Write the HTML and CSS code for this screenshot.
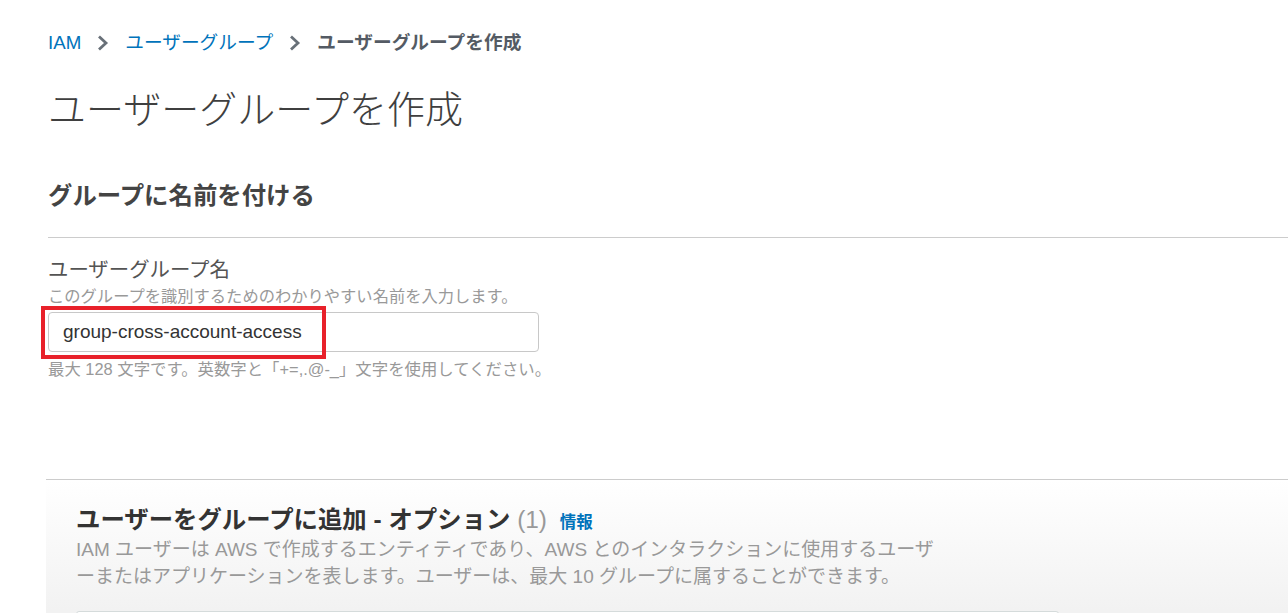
FILE: index.html
```html
<!DOCTYPE html>
<html lang="ja">
<head>
  <meta charset="UTF-8" />
  <meta name="viewport" content="width=device-width, initial-scale=1.0"/>
  <title>ユーザーグループを作成</title>
  <link rel="stylesheet" href="styles.css">
</head>
<body>

  <div class="page">
    <nav class="breadcrumb">
      <a href="#">IAM</a>
      <svg class="chevron" width="12" height="18" viewBox="0 0 12 18"><path d="M2 2.5 L9 9 L2 15.5" fill="none" stroke="#687078" stroke-width="2.8"/></svg>
      <a href="#">ユーザーグループ</a>
      <svg class="chevron" width="12" height="18" viewBox="0 0 12 18"><path d="M2 2.5 L9 9 L2 15.5" fill="none" stroke="#687078" stroke-width="2.8"/></svg>
      <span class="current">ユーザーグループを作成</span>
    </nav>

    <h1>ユーザーグループを作成</h1>

    <div class="section-head">
      <h2>グループに名前を付ける</h2>
    </div>

    <div class="field">
      <label for="groupName">ユーザーグループ名</label>
      <div class="field-desc">このグループを識別するためのわかりやすい名前を入力します。</div>
      <div class="input-wrap">
        <input type="text" id="groupName" value="group-cross-account-access">
        <div class="highlight"></div>
      </div>
      <div class="field-hint">最大 128 文字です。英数字と「+=,.@-_」文字を使用してください。</div>
    </div>

    <div class="panel">
      <div class="panel-title">
        ユーザーをグループに追加 - オプション <span class="count">(1)</span> <a class="info" href="#">情報</a>
      </div>
      <div class="panel-desc">
        IAM ユーザーは AWS で作成するエンティティであり、AWS とのインタラクションに使用するユーザ<br>ーまたはアプリケーションを表します。ユーザーは、最大 10 グループに属することができます。
      </div>
      <div class="card"></div>
    </div>
  </div>

</body>
</html>
```

FILE: styles.css
```css
body {
  margin: 0;
  background: #fff;
  font-family: 'Liberation Sans', 'Noto Sans CJK JP', sans-serif;
  color: #444;
  overflow: hidden;
}

.page {
  padding: 33px 0 0 48px;
}

.breadcrumb {
  display: flex;
  align-items: center;
  height: 20px;
  font-size: 18.7px;
  line-height: 20px;
}

.breadcrumb a {
  color: #0073bb;
  text-decoration: none;
}

.chevron {
  margin: 0 16px 0 16px;
}

.breadcrumb .current {
  color: #545b64;
  font-weight: bold;
}

h1 {
  margin: 34px 0 0;
  font-size: 38px;
  line-height: 46px;
  font-weight: 300;
  color: #3f3f3f;
}

.section-head {
  margin-top: 47px;
  padding-bottom: 25px;
  border-bottom: 1px solid #cccccc;
}

h2 {
  margin: 0;
  font-size: 24.4px;
  line-height: 32px;
  font-weight: bold;
  color: #444;
}

.field {
  padding-top: 19px;
}

label {
  display: block;
  font-size: 20.4px;
  line-height: 26px;
  color: #545454;
}

.field-desc {
  margin-top: 2px;
  font-size: 16.3px;
  line-height: 22px;
  color: #999999;
}

.input-wrap {
  position: relative;
  margin-top: 5px;
  width: 491px;
}

input {
  width: 100%;
  height: 40px;
  box-sizing: border-box;
  padding: 0 14px;
  border: 1px solid #c8c8c8;
  border-radius: 4px;
  font-family: 'Liberation Sans', sans-serif;
  font-size: 19px;
  color: #333;
  outline: none;
}

.highlight {
  position: absolute;
  left: -7px;
  top: -6px;
  width: 285px;
  height: 53px;
  box-sizing: border-box;
  border: 4px solid #e8212a;
}

.field-hint {
  margin-top: 6px;
  font-size: 16.4px;
  line-height: 22px;
  color: #999999;
}

.panel {
  margin-top: 99px;
  margin-left: -2px;
  padding: 26px 0 0 30px;
  border-top: 1px solid #cccccc;
  background: linear-gradient(#ffffff, #f2f2f2 130px);
  height: 300px;
}

.panel-title {
  font-size: 24.4px;
  line-height: 28px;
  font-weight: bold;
  color: #333;
}

.panel-title .count {
  font-weight: normal;
  color: #999999;
}

.panel-title .info {
  margin-left: 6px;
  font-size: 16.5px;
  color: #0073bb;
  text-decoration: none;
}

.panel-desc {
  font-size: 19px;
  line-height: 27px;
  color: #999999;
}

.card {
  margin-top: 21px;
  width: 981px;
  height: 120px;
  background: #fff;
  border: 1px solid #d5dbdb;
  border-radius: 3px;
}
```
